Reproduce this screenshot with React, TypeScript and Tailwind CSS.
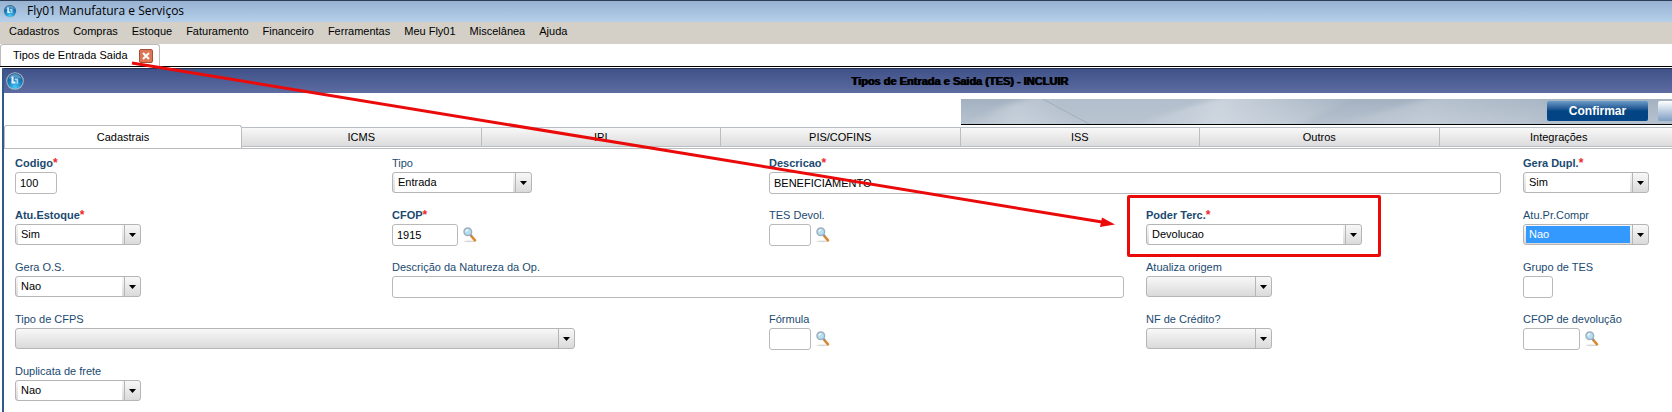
import type { ReactNode } from 'react';

const menus = ['Cadastros', 'Compras', 'Estoque', 'Faturamento', 'Financeiro', 'Ferramentas', 'Meu Fly01', 'Miscelânea', 'Ajuda'];
const tabs = ['ICMS', 'IPI', 'PIS/COFINS', 'ISS', 'Outros', 'Integrações'];

function Logo({ className }: { className: string }) {
  return (
    <svg viewBox="0 0 18 18" className={className} aria-hidden="true">
      <defs>
        <radialGradient id="globe" cx="50%" cy="90%" r="85%">
          <stop offset="0" stopColor="#45ccf8" />
          <stop offset="0.5" stopColor="#1f86c4" />
          <stop offset="1" stopColor="#10528c" />
        </radialGradient>
      </defs>
      <circle cx="9" cy="9" r="8.8" fill="#a9bccb" />
      <circle cx="9" cy="9" r="7.8" fill="url(#globe)" />
      <path d="M2.600 7a6.600 6.600 0 0 1 12.800 0C12 5.200 6 5.200 2.600 7z" fill="#9ccbe8" opacity="0.5" />
      <path d="M5.500 4.500h2v5h2v2H5.500z" fill="#e8f6ff" />
      <path d="M8.600 6.500h3.600v5.200h-1.700V8.300H8.600z" fill="#a6dbf5" />
    </svg>
  );
}

function SearchIcon() {
  return (
    <svg viewBox="0 0 14 16" className="h-4 w-3.5" aria-hidden="true">
      <ellipse cx="6.500" cy="14.300" rx="5.500" ry="0.900" fill="#d9d9d9" />
      <path d="M8.300 9l3.700 4.300" stroke="#d98a2b" strokeWidth="2.600" strokeLinecap="round" />
      <path d="M7.400 7.700l1.500 1.700" stroke="#8a8f96" strokeWidth="1.800" />
      <circle cx="4.800" cy="4.800" r="3.800" fill="#b5dff4" stroke="#9fb0bb" strokeWidth="1.500" />
      <path d="M2.800 4.600a2.200 2.200 0 0 1 2.200-1.800" stroke="#fff" strokeWidth="1.200" fill="none" />
    </svg>
  );
}

type FieldProps = {
  id: string;
  label: string;
  required?: boolean;
  className?: string;
  children: ReactNode;
};

function Field({ id, label, required, className = '', children }: FieldProps) {
  return (
    <div className={`flex min-w-0 flex-col gap-0.5 ${className}`}>
      <label htmlFor={id} className={`h-3.5 leading-3.5 whitespace-nowrap text-[#1b4a70] ${required ? 'font-bold' : ''}`}>
        {label}
        {required && <span className="text-[12px] text-[#f02828]">*</span>}
      </label>
      <div className="flex h-[22px] items-start gap-[5px]">{children}</div>
    </div>
  );
}

function TextBox({ id, value = '', width }: { id: string; value?: string; width: string }) {
  return (
    <input
      id={id}
      type="text"
      defaultValue={value}
      className={`h-[22px] rounded-[3px] border border-[#b9b9b9] bg-white px-1 text-black ${width}`}
    />
  );
}

function Lookup({ label }: { label: string }) {
  return (
    <button type="button" aria-label={label} className="pt-[3px]">
      <SearchIcon />
    </button>
  );
}

function Combo({ id, value = '', width, selected }: { id: string; value?: string; width: string; selected?: boolean }) {
  const fill = selected ? 'bg-[#3399ff] text-white' : value ? 'bg-white text-black' : 'bg-transparent';
  return (
    <div className={`flex h-[21px] rounded-[3px] border border-[#b5b5b5] bg-linear-to-b from-[#f8f8f8] to-[#dadada] pl-0.5 ${width}`}>
      <select id={id} defaultValue={value} className={`min-w-0 flex-1 appearance-none pl-[3px] ${selected ? 'my-px' : ''} ${fill}`}>
        <option value={value}>{value}</option>
      </select>
      <span className="pointer-events-none ml-0.5 flex w-4 items-center justify-center border-l border-[#b5b5b5]">
        <svg viewBox="0 0 7 4" className="h-1 w-[7px]" aria-hidden="true">
          <path d="M0 0h7L3.500 4z" fill="#000" />
        </svg>
      </span>
    </div>
  );
}

export default function App() {
  return (
    <div className="relative flex min-h-screen flex-col overflow-hidden bg-white font-['Liberation_Sans',Arial,sans-serif] text-[12px] text-black">
      <header className="flex h-[22px] items-center gap-2.5 border-t border-[#2c3d55] bg-linear-to-b from-[#97b2d2] to-[#b6d0ea] pb-0.5 pl-[3px] font-['Open_Sans','Noto_Sans',sans-serif]">
        <Logo className="size-3.5" />
        <h1>Fly01 Manufatura e Serviços</h1>
      </header>

      <nav className="flex h-[22px] items-center gap-3.5 bg-[#d4d0c8] pb-[3px] pl-[9px] text-[11px]">
        {menus.map((m) => (
          <button key={m} type="button">
            {m}
          </button>
        ))}
      </nav>

      <div className="flex h-[23px] border-b border-black">
        <div className="flex w-40 items-center justify-between rounded-t-[3px] border border-b-0 border-[#bcbcbc] bg-white pr-1.5 pl-3">
          <span className="text-[11px]">Tipos de Entrada Saida</span>
          <button type="button" aria-label="Fechar" className="flex size-3.5 items-center justify-center rounded-[2px] border border-[#a94f35] bg-[#dc7655]">
            <svg viewBox="0 0 8 8" className="size-2" aria-hidden="true">
              <path d="M1 1l6 6M7 1L1 7" stroke="#fff" strokeWidth="2" />
            </svg>
          </button>
        </div>
      </div>

      <main className="mt-px ml-0.5 flex flex-1 flex-col border-l-2 border-[#33588a]">
        <div className="flex h-[25px] items-center border-t border-[#26324f] bg-linear-to-b from-[#3f5289] to-[#5d6ca1] pl-0.5">
          <Logo className="size-[18px]" />
          <h2 className="flex-1 pl-[223px] text-center text-[11px] font-bold text-shadow-[1px_0_0_#000000]">Tipos de Entrada e Saida (TES) - INCLUIR</h2>
        </div>

        <div className="relative mt-1.5 ml-auto flex h-[26px] w-[711px] justify-end gap-2.5 border-b border-black bg-linear-to-b from-[#a3b1c1] to-[#b7c2ce] pt-0.5">
          {/* light streaks behind the toolbar buttons */}
          <svg viewBox="0 0 711 25" preserveAspectRatio="none" className="absolute inset-0 h-[25px] w-full overflow-hidden" aria-hidden="true">
            <defs>
              <linearGradient id="streak" x1="0" x2="1">
                <stop offset="0" stopColor="#d5dce4" stopOpacity="0" />
                <stop offset="0.4" stopColor="#d5dce4" stopOpacity="0.8" />
                <stop offset="1" stopColor="#d5dce4" stopOpacity="0" />
              </linearGradient>
              <filter id="soft" x="-10%" y="-40%" width="120%" height="180%">
                <feGaussianBlur stdDeviation="5 2" />
              </filter>
            </defs>
            <g filter="url(#soft)">
              <path d="M0 30L40 8 82 -5l60 35z" fill="url(#streak)" opacity="0.7" />
              <path d="M82 -5l60 35h40C220 14 250 4 290 -5z" fill="#bdc7d3" opacity="0.6" />
              <path d="M160 30C210 15 235 5 275 -5H400L330 30z" fill="url(#streak)" />
              <path d="M360 30C410 14 450 6 480 -5H620L560 30z" fill="url(#streak)" opacity="0.5" />
            </g>
            <path d="M82 0l46 25" stroke="#98a6b6" strokeWidth="1" opacity="0.7" />
          </svg>
          <button
            type="button"
            className="relative h-5 w-[101px] rounded-[2px] bg-linear-to-b from-[#6d9cc8] via-[#034584] to-[#034584] font-bold text-white"
          >
            Confirmar
          </button>
          <button type="button" aria-label="Cancelar" className="relative h-5 w-3.5 rounded-l-[2px] bg-linear-to-b from-white to-[#7f9fc4]" />
        </div>

        <div role="tablist" className="-mr-[7px] flex h-6 items-end border-b border-[#bcbcbc] text-[11px]">
          <button type="button" role="tab" aria-selected="true" className="h-full w-[238px] rounded-t-[3px] border border-b-0 border-[#bcbcbc] bg-white">
            Cadastrais
          </button>
          {tabs.map((t) => (
            <button
              key={t}
              type="button"
              role="tab"
              aria-selected="false"
              className="mb-px h-5 flex-1 border border-l-0 border-[#b9bec4] bg-linear-to-b from-[#f8f8f8] to-[#dcdcdc]"
            >
              {t}
            </button>
          ))}
        </div>

        <form className="grid grid-cols-[377fr_377fr_377fr_377fr_149fr] gap-y-3.5 pt-[7px] pl-[11px] text-[11px]">
          <Field id="codigo" label="Codigo" required>
            <TextBox id="codigo" value="100" width="w-[42px]" />
          </Field>
          <Field id="tipo" label="Tipo">
            <Combo id="tipo" value="Entrada" width="w-[140px]" />
          </Field>
          <Field id="descricao" label="Descricao" required className="col-span-2 pr-[22px]">
            <TextBox id="descricao" value="BENEFICIAMENTO" width="w-full" />
          </Field>
          <Field id="gera-dupl" label="Gera Dupl." required>
            <Combo id="gera-dupl" value="Sim" width="w-[126px]" />
          </Field>

          <Field id="atu-estoque" label="Atu.Estoque" required>
            <Combo id="atu-estoque" value="Sim" width="w-[126px]" />
          </Field>
          <Field id="cfop" label="CFOP" required>
            <TextBox id="cfop" value="1915" width="w-[66px]" />
            <Lookup label="Pesquisar CFOP" />
          </Field>
          <Field id="tes-devol" label="TES Devol.">
            <TextBox id="tes-devol" width="w-[42px]" />
            <Lookup label="Pesquisar TES" />
          </Field>
          <Field id="poder-terc" label="Poder Terc." required className="relative">
            <Combo id="poder-terc" value="Devolucao" width="w-[216px]" />
            <span className="pointer-events-none absolute -top-[13px] -left-[19px] h-[62px] w-[254px] rounded-[2px] border-3 border-[#ea0a0a]" />
          </Field>
          <Field id="atu-pr-compr" label="Atu.Pr.Compr">
            <Combo id="atu-pr-compr" value="Nao" width="w-[126px]" selected />
          </Field>

          <Field id="gera-os" label="Gera O.S.">
            <Combo id="gera-os" value="Nao" width="w-[126px]" />
          </Field>
          <Field id="natureza" label="Descrição da Natureza da Op." className="col-span-2 pr-[22px]">
            <TextBox id="natureza" width="w-full" />
          </Field>
          <Field id="atualiza-origem" label="Atualiza origem">
            <Combo id="atualiza-origem" width="w-[126px]" />
          </Field>
          <Field id="grupo-tes" label="Grupo de TES">
            <TextBox id="grupo-tes" width="w-[30px]" />
          </Field>

          <Field id="tipo-cfps" label="Tipo de CFPS" className="col-span-2">
            <Combo id="tipo-cfps" width="w-[560px]" />
          </Field>
          <Field id="formula" label="Fórmula">
            <TextBox id="formula" width="w-[42px]" />
            <Lookup label="Pesquisar fórmula" />
          </Field>
          <Field id="nf-credito" label="NF de Crédito?">
            <Combo id="nf-credito" width="w-[126px]" />
          </Field>
          <Field id="cfop-devolucao" label="CFOP de devolução">
            <TextBox id="cfop-devolucao" width="w-[57px]" />
            <Lookup label="Pesquisar CFOP de devolução" />
          </Field>

          <Field id="duplicata-frete" label="Duplicata de frete">
            <Combo id="duplicata-frete" value="Nao" width="w-[126px]" />
          </Field>
        </form>
      </main>

      {/* arrow from the open tab to the Poder Terc. field */}
      <svg viewBox="0 0 1120 240" className="pointer-events-none absolute top-0 left-0 h-60 w-[1120px]" aria-hidden="true">
        <path d="M132 63L1102 222" stroke="#ea0a0a" strokeWidth="3" />
        <path d="M1102 217.500L1115 224.500L1100 227z" fill="#ea0a0a" />
      </svg>
    </div>
  );
}
